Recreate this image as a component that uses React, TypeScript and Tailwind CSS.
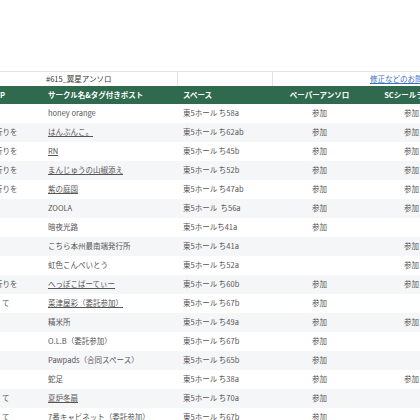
const rows: {
  note: '' | 'ori' | 'te';
  name: string;
  link: boolean;
  space: string;
  paper: boolean;
  sc: boolean;
}[] = [
  { note: '', name: 'honey orange', link: false, space: '東5ホール ち58a', paper: true, sc: true },
  { note: 'ori', name: 'はんぶんこ。', link: true, space: '東5ホール ち62ab', paper: true, sc: true },
  { note: 'ori', name: 'RN', link: true, space: '東5ホール ち45b', paper: true, sc: true },
  { note: 'ori', name: 'まんじゅうの山椒添え', link: true, space: '東5ホール ち52b', paper: true, sc: true },
  { note: 'ori', name: '紫の庭園', link: true, space: '東5ホール ち47ab', paper: true, sc: true },
  { note: '', name: 'ZOOLA', link: false, space: '東5ホール  ち56a', paper: true, sc: true },
  { note: '', name: '暗夜光路', link: false, space: '東5ホールち41a', paper: true, sc: false },
  { note: '', name: 'こちら本州最南端発行所', link: false, space: '東5ホール ち41a', paper: false, sc: true },
  { note: '', name: '虹色こんぺいとう', link: false, space: '東5ホール ち52a', paper: false, sc: true },
  { note: 'ori', name: 'へっぽこぱーてぃー', link: true, space: '東5ホール ち60b', paper: true, sc: true },
  { note: 'te', name: '菜津屋彩（委託参加）', link: true, space: '東5ホール ち67b', paper: true, sc: false },
  { note: '', name: '精米所', link: false, space: '東5ホール ち49a', paper: true, sc: true },
  { note: '', name: 'O.L.B（委託参加）', link: false, space: '東5ホール ち67b', paper: true, sc: false },
  { note: '', name: 'Pawpads（合同スペース）', link: false, space: '東5ホール ち65b', paper: true, sc: false },
  { note: '', name: '蛇足', link: false, space: '東5ホール ち38a', paper: true, sc: true },
  { note: 'te', name: '夏炉冬扇', link: true, space: '東5ホール ち70a', paper: true, sc: false },
  { note: 'te', name: '7番キャビネット（委託参加）', link: true, space: '東5ホール ち67b', paper: true, sc: false },
];

export default function App() {
  return (
    <div
      className="w-[420px] h-[420px] overflow-hidden bg-white pt-[71px] text-[7.5px] text-[#555]"
      style={{ fontFamily: '"Noto Sans CJK JP", "Noto Sans", sans-serif' }}
    >
      <table className="table-fixed border-collapse w-[456px] whitespace-nowrap">
        <colgroup>
          <col className="w-[43px]" />
          <col className="w-[134px]" />
          <col className="w-[95px]" />
          <col className="w-[95px]" />
          <col className="w-[89px]" />
        </colgroup>
        <tbody>
          <tr className="h-[14px] border-t border-[#e3e3e3]">
            <td />
            <td className="pl-[3px] text-[#333] overflow-hidden">#615_翼星アンソロ</td>
            <td className="border-l border-[#e3e3e3]" />
            <td className="border-l border-[#e3e3e3]" />
            <td className="pl-[3px] overflow-hidden">
              <a className="text-[#3b6fc4] underline">修正などのお問い合わせ</a>
            </td>
          </tr>
          <tr className="h-[18px] bg-[#2f6a4e] text-white font-bold">
            <td className="overflow-hidden">P</td>
            <td className="pl-[5px]">サークル名&amp;タグ付きポスト</td>
            <td className="pl-[6px]">スペース</td>
            <td className="text-center">ペーパーアンソロ</td>
            <td className="text-center">SCシールラリー</td>
          </tr>
          {rows.map((r, i) => (
            <tr key={i} className={`h-[19px] ${i % 2 === 1 ? 'bg-[#f5f6f8]' : 'bg-white'}`}>
              <td className="overflow-hidden">
                {r.note === 'ori' && <span className="-ml-[5px]">折りを</span>}
                {r.note === 'te' && <span className="ml-[2px]">て</span>}
              </td>
              <td className="pl-[5px] overflow-hidden">
                {r.link ? <a className="underline text-[#555]">{r.name}</a> : r.name}
              </td>
              <td className="pl-[6px] whitespace-pre">{r.space}</td>
              <td className="text-center">{r.paper ? '参加' : ''}</td>
              <td className="text-center">{r.sc ? '参加' : ''}</td>
            </tr>
          ))}
        </tbody>
      </table>
    </div>
  );
}
